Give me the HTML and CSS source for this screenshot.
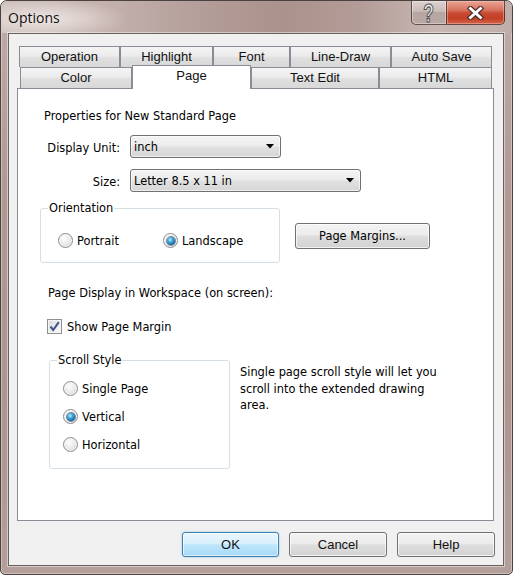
FILE: index.html
```html
<!DOCTYPE html>
<html>
<head>
<meta charset="utf-8">
<title>Options</title>
<link rel="stylesheet" href="styles.css">
</head>
<body>
<div class="window">
  <div class="titlebar">
    <span class="title">Options</span>
    <div class="caps">
      <div class="cap cap-help"><span class="qmark">?</span></div>
      <div class="cap cap-close">
        <svg width="17" height="14" viewBox="0 0 17 14"><path d="M3.5 2.5 L13.5 11.5 M13.5 2.5 L3.5 11.5" stroke="#4a2a24" stroke-width="5.2" stroke-linecap="square" fill="none"/><path d="M3.5 2.5 L13.5 11.5 M13.5 2.5 L3.5 11.5" stroke="#ffffff" stroke-width="3" stroke-linecap="square" fill="none"/></svg>
      </div>
    </div>
  </div>
  <div class="client">
    <div class="tabs">
      <div class="tabrow row1">
        <div class="tab t-operation">Operation</div>
        <div class="tab t-highlight">Highlight</div>
        <div class="tab t-font">Font</div>
        <div class="tab t-linedraw">Line-Draw</div>
        <div class="tab t-autosave">Auto Save</div>
      </div>
      <div class="tabrow row2">
        <div class="tab t-color">Color</div>
        <div class="tab t-page sel">Page</div>
        <div class="tab t-textedit">Text Edit</div>
        <div class="tab t-html">HTML</div>
      </div>
    </div>
    <div class="panel">
      <div class="heading">Properties for New Standard Page</div>
      <div class="form-grid">
        <div class="lbl">Display Unit:</div>
        <div class="combo combo-unit"><span>inch</span><svg class="arrow" width="8" height="5" viewBox="0 0 8 5"><path d="M0 0 H8 L4 4.5 Z" fill="#000"/></svg></div>
        <div class="lbl">Size:</div>
        <div class="combo combo-size"><span>Letter 8.5 x 11 in</span><svg class="arrow" width="8" height="5" viewBox="0 0 8 5"><path d="M0 0 H8 L4 4.5 Z" fill="#000"/></svg></div>
      </div>
      <div class="orient-row">
        <fieldset class="group group-orient">
          <legend>Orientation</legend>
          <div class="radio-line">
            <div class="opt opt-portrait"><span class="radio"></span><span>Portrait</span></div>
            <div class="opt"><span class="radio checked"></span><span>Landscape</span></div>
          </div>
        </fieldset>
        <div class="btn btn-margins">Page Margins...</div>
      </div>
      <div class="display-heading">Page Display in Workspace (on screen):</div>
      <div class="check-row">
        <span class="checkbox"><svg width="13" height="13" viewBox="0 0 13 13"><path d="M2.5 6.5 L5.2 10 L10.8 2.2" stroke="#42578f" stroke-width="2.1" fill="none" stroke-linejoin="miter"/></svg></span>
        <span>Show Page Margin</span>
      </div>
      <div class="scroll-row">
        <fieldset class="group group-scroll">
          <legend>Scroll Style</legend>
          <div class="radio-col">
            <div class="opt"><span class="radio"></span><span>Single Page</span></div>
            <div class="opt"><span class="radio checked"></span><span>Vertical</span></div>
            <div class="opt"><span class="radio"></span><span>Horizontal</span></div>
          </div>
        </fieldset>
        <div class="desc">Single page scroll style will let you scroll into the extended drawing area.</div>
      </div>
    </div>
    <div class="buttons">
      <div class="dbtn dbtn-ok">OK</div>
      <div class="dbtn">Cancel</div>
      <div class="dbtn">Help</div>
    </div>
  </div>
</div>
</body>
</html>
```
FILE: styles.css
```css
* { box-sizing: border-box; }
html, body { margin: 0; padding: 0; background: #ffffff; }
body { width: 513px; height: 575px; overflow: hidden; }

.window {
  width: 513px;
  height: 575px;
  border: 1px solid #4b4140;
  border-radius: 7px 7px 5px 5px;
  background: linear-gradient(180deg, #bfaca8 0%, #b09893 35%, #ad9590 70%, #b49f9a 100%);
  box-shadow: inset 0 0 0 1px rgba(255,255,255,0.35);
  display: flex;
  flex-direction: column;
  overflow: hidden;
}

.titlebar {
  height: 32px;
  flex: none;
  display: flex;
  justify-content: space-between;
  align-items: flex-start;
  padding: 0 7px 0 7px;
  background:
    radial-gradient(ellipse 85px 20px at 42px 18px, rgba(245,238,236,0.85), rgba(245,238,236,0) 100%),
    linear-gradient(90deg, #cdbfbc 0%, #c4b2ae 20%, #b39d98 40%, #ab928c 55%, #b39c97 70%, #c7b7b3 85%, #c0aeaa 100%);
}
.title {
  font-family: "Open Sans", "DejaVu Sans", sans-serif;
  font-size: 14px;
  line-height: 20px;
  margin-top: 7px;
  color: #101010;
}
.caps { display: flex; }
.cap {
  height: 24px;
  display: flex;
  align-items: center;
  justify-content: center;
  border: 1px solid rgba(60,40,38,0.75);
  border-top: none;
}
.cap-help {
  width: 35px;
  border-right: none;
  border-radius: 0 0 0 5px;
  background: linear-gradient(180deg, #ddd2d0 0%, #c9bcb9 45%, #b6a5a1 50%, #b9a8a4 100%);
  box-shadow: inset 0 0 0 1px rgba(255,255,255,0.35);
}
.qmark {
  font-family: "Liberation Sans", sans-serif;
  font-weight: bold;
  font-size: 25px;
  line-height: 22px;
  color: #f0eeee;
  -webkit-text-stroke: 1.2px #505050;
  transform: scaleX(0.7);
  display: inline-block;
  margin-top: 1px;
}
.cap-close {
  width: 59px;
  border-radius: 0 0 5px 0;
  background: linear-gradient(180deg, #e9a595 0%, #d8735f 40%, #c94a33 52%, #c23f26 75%, #d4644a 100%);
  box-shadow: inset 0 0 0 1px rgba(255,200,190,0.45);
}
.cap-close svg { display: block; }

.client {
  flex: none;
  margin: 0 8px 0 7px;
  height: 533px;
  border: 1px solid #6a605e;
  background: #f0f0f0;
  box-shadow: 0 0 0 1px rgba(255,255,255,0.45);
  display: flex;
  flex-direction: column;
}

.tabs { margin-top: 12px; }
.tabrow { display: flex; height: 21px; align-items: flex-start; }
.row1 { margin-left: 10px; }
.row2 { margin-left: 11px; }
.tab {
  height: 21px;
  border: 1px solid #898c95;
  border-bottom: none;
  background: linear-gradient(180deg, #f4f4f4 0%, #ebebeb 45%, #dfdfdf 55%, #d8d8d8 100%);
  font-family: "Liberation Sans", Arial, sans-serif;
  font-size: 13px;
  line-height: 20px;
  text-align: center;
  color: #111;
}
.t-operation { width: 101px; }
.t-highlight { width: 93px; }
.t-font { width: 77px; }
.t-linedraw { width: 101px; }
.t-autosave { width: 101px; }
.t-color { width: 112px; }
.t-page { width: 119px; }
.t-textedit { width: 128px; }
.t-html { width: 113px; }
.tab.sel {
  height: 24px;
  margin-top: -2px;
  background: #ffffff;
  position: relative;
  z-index: 1;
  line-height: 19px;
}

.panel {
  margin-left: 8px;
  width: 477px;
  height: 433px;
  border: 1px solid #898c95;
  background: #ffffff;
  font-family: "DejaVu Sans", sans-serif;
  font-size: 11.4px;
  color: #000;
  display: flex;
  flex-direction: column;
  align-items: flex-start;
}

.heading { margin: 20px 0 0 26px; line-height: 14px; white-space: nowrap; }

.form-grid {
  margin: 12px 0 0 26px;
  display: grid;
  grid-template-columns: 76px auto;
  column-gap: 10px;
  row-gap: 11px;
  align-items: center;
}
.lbl { text-align: right; line-height: 14px; padding-top: 2px; white-space: nowrap; }
.combo {
  height: 23px;
  border: 1px solid #707070;
  border-radius: 3px;
  background: linear-gradient(180deg, #f3f3f3 0%, #ececec 45%, #e0e0e0 55%, #d6d6d6 100%);
  box-shadow: inset 0 0 0 1px rgba(255,255,255,0.6);
  display: flex;
  align-items: center;
  justify-content: space-between;
  padding: 0 6px 0 3px;
  line-height: 14px;
  white-space: nowrap;
}
.combo-unit { width: 151px; }
.combo-size { width: 231px; }
.arrow { display: block; }

.orient-row { margin: 9px 0 0 22px; display: flex; align-items: flex-end; }
.group {
  margin: 0;
  border: 1px solid #d5dfe5;
  border-radius: 3px;
  padding: 0 0 0 7px;
  min-width: 0;
}
.group legend { padding: 0 1px; line-height: 14px; }
.group-orient { width: 240px; padding-top: 18px; padding-bottom: 14px; }
.radio-line { display: flex; margin-left: 10px; }
.opt { display: flex; align-items: center; gap: 4px; height: 15px; line-height: 14px; white-space: nowrap; }
.opt-portrait { width: 105px; }

.radio {
  width: 15px;
  height: 15px;
  border-radius: 50%;
  border: 1px solid #8a8a8a;
  background: radial-gradient(circle at 40% 35%, #fdfdfd 0%, #ececec 45%, #d0d0d0 100%);
  box-shadow: inset 0 0 0 1px rgba(255,255,255,0.8);
  display: flex;
  align-items: center;
  justify-content: center;
  flex: none;
}
.radio.checked::after {
  content: "";
  width: 8px;
  height: 8px;
  border-radius: 50%;
  background: radial-gradient(circle at 40% 35%, #bff0ff 0%, #3fa3dc 35%, #17679e 70%, #0c3c63 100%);
  box-shadow: 0 0 0 1px rgba(20,50,80,0.55);
}

.btn-margins {
  margin: 0 0 14px 15px;
}
.btn, .dbtn {
  border: 1px solid #707070;
  border-radius: 3px;
  background: linear-gradient(180deg, #f3f3f3 0%, #ececec 45%, #dedede 52%, #d2d2d2 100%);
  box-shadow: inset 0 0 0 1px rgba(255,255,255,0.7);
  display: flex;
  align-items: center;
  justify-content: center;
  white-space: nowrap;
}
.btn { width: 135px; height: 26px; line-height: 14px; }

.display-heading { margin: 23px 0 0 30px; line-height: 14px; white-space: nowrap; }
.check-row { margin: 19px 0 0 29px; display: flex; align-items: center; gap: 5px; height: 15px; line-height: 14px; white-space: nowrap; }
.checkbox {
  width: 15px;
  height: 15px;
  border: 1px solid #8e8f8f;
  background: linear-gradient(135deg, #d9dadb 0%, #f0f0f0 60%, #fafafa 100%);
  box-shadow: inset 0 0 0 1px #f6f6f6;
  display: flex;
  align-items: center;
  justify-content: center;
  flex: none;
}
.checkbox svg { display: block; }

.scroll-row { margin: 19px 0 0 31px; display: flex; align-items: flex-start; }
.group-scroll { width: 181px; padding-top: 14px; padding-bottom: 16px; }
.radio-col { display: flex; flex-direction: column; gap: 13px; margin-left: 6px; }
.desc { margin: 11px 0 0 10px; width: 205px; line-height: 16.5px; }

.buttons {
  display: flex;
  justify-content: flex-end;
  gap: 10px;
  padding-right: 8px;
  margin-top: 11px;
}
.dbtn {
  width: 98px;
  height: 25px;
  font-family: "Liberation Sans", Arial, sans-serif;
  font-size: 13px;
  color: #111;
}
.dbtn-ok {
  width: 97px;
  border-color: #3c7fb1;
  background: linear-gradient(180deg, #eaf6fd 0%, #d9f0fc 45%, #bee6fd 52%, #a7d9f5 100%);
  box-shadow: inset 0 0 0 1px rgba(255,255,255,0.6), 0 0 2px rgba(60,160,220,0.6);
}
```
